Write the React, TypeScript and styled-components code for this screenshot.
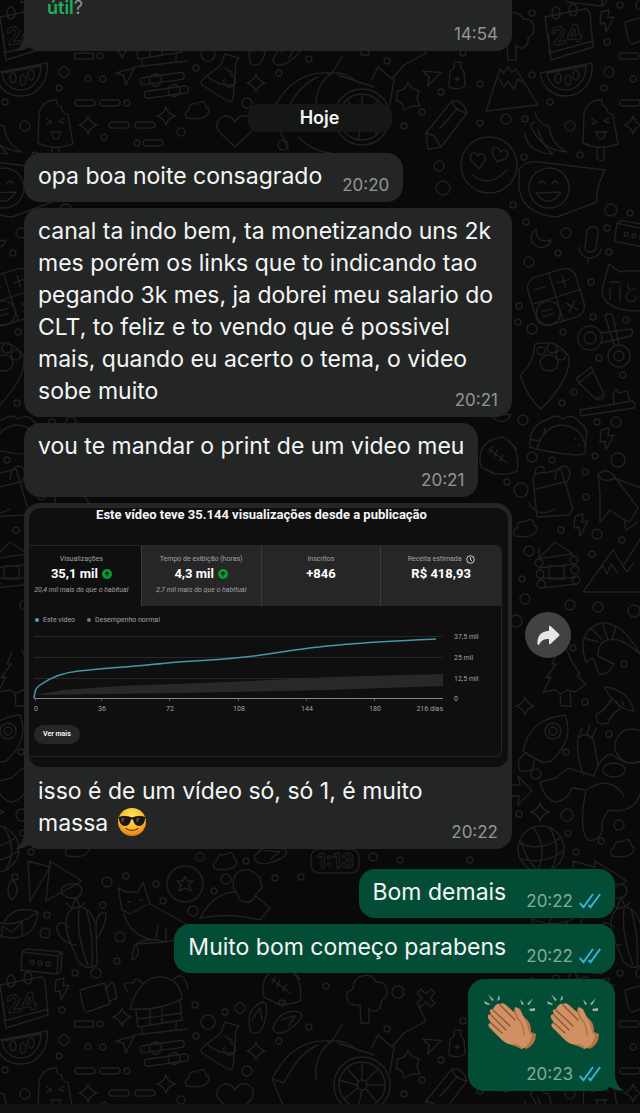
import React from "react";
import styled, { createGlobalStyle, css } from "styled-components";

const GlobalStyle = createGlobalStyle`
  *, *::before, *::after { box-sizing: border-box; }
  body { margin: 0; background: #090909; }
`;

const ui = `Inter, "Liberation Sans", sans-serif`;
const studio = `Roboto, "Liberation Sans", sans-serif`;

const Page = styled.div`
  position: relative;
  display: flex;
  flex-direction: column;
  min-height: 100vh;
  overflow: hidden;
  background: #090909;
  color: #f4f5f5;
  font-family: ${ui};
`;

const WallpaperSvg = styled.svg`
  position: absolute;
  inset: 0;
  width: 100%;
  height: 100%;
  fill: none;
  stroke: #212121;
  stroke-width: 1.4;
  stroke-linecap: round;
  stroke-linejoin: round;

  text { stroke-width: 1; }
`;

const Thread = styled.main`
  position: relative;
  flex: 1;
  display: flex;
  flex-direction: column;
  gap: 6px;
  padding: 0 25px 13px 24px;
`;

const InputEdge = styled.footer`
  position: relative;
  height: 9px;
  background: #111212;
`;

const Row = styled.div<{ $out?: boolean; $gapTop?: number }>`
  display: flex;
  align-items: flex-start;
  justify-content: ${(p) => (p.$out ? "flex-end" : "flex-start")};
  gap: 13px;
  margin-top: ${(p) => p.$gapTop ?? 0}px;
`;

const Bubble = styled.article<{ $out?: boolean; $media?: boolean; $continued?: boolean }>`
  position: relative;
  isolation: isolate;
  display: flow-root;
  max-width: 488px;
  padding: 7px 14px;
  border-radius: 16px;
  background: ${(p) => (p.$out ? "#034d37" : "#242626")};
  font-size: 23px;
  line-height: 32px;
  ${(p) => p.$media && css`padding: 5px 4px 7px 5px; flex: 0 1 488px;`}
  ${(p) =>
    p.$continued &&
    css`
      flex: 0 1 488px;
      padding: 0 14px 7px 23px;
      border-radius: 0 0 16px 16px;
    `}
`;

const Caption = styled.div`
  display: flow-root;
  padding: 8px 10px 0 9px;
`;

const Stamp = styled.span<{ $out?: boolean; $stacked?: boolean }>`
  display: flex;
  align-items: center;
  justify-content: flex-end;
  gap: 6px;
  height: 20px;
  color: ${(p) => (p.$out ? "#83ab9d" : "#939595")};
  font-size: 17px;
  line-height: 20px;
  ${(p) =>
    p.$stacked
      ? css`margin-top: 8px;`
      : css`
          float: right;
          margin: 15px 0 0 20px;
        `}
`;

const Suggestion = styled.p`
  margin: 0 0 6px;
  color: #939595;
  font-size: 18px;
  line-height: 16px;

  a {
    color: #1fae5b;
    font-weight: 600;
    text-decoration: none;
  }
`;

const DayLabel = styled.h2`
  align-self: center;
  width: 144px;
  margin: 47px 0 15px;
  border-radius: 10px;
  background: #151616;
  font-size: 18px;
  font-weight: 600;
  line-height: 28px;
  text-align: center;
`;

const TailSvg = styled.svg<{ $out?: boolean }>`
  position: absolute;
  z-index: -1;
  bottom: 0;
  ${(p) => (p.$out ? "right: -9px;" : "left: -9px; transform: scaleX(-1);")}
  width: 26px;
  height: 20px;
  fill: ${(p) => (p.$out ? "#034d37" : "#242626")};
`;

const ForwardButton = styled.button`
  display: grid;
  place-items: center;
  flex: none;
  width: 46px;
  height: 46px;
  margin-top: 109px;
  padding: 0;
  border: 0;
  border-radius: 50%;
  background: #414244;
`;

const EmojiRow = styled.div`
  display: flex;
  gap: 7px;
  padding: 5px 0;
`;

const SmallEmoji = styled.svg`
  width: 30px;
  height: 30px;
  margin-left: 2px;
  vertical-align: -6px;
`;

/* Video statistics snapshot */

const Snapshot = styled.section`
  height: 259px;
  overflow: hidden;
  border-radius: 12px;
  background: #0f0f0f;
  color: #a2a2a2;
  font-family: ${studio};
  font-size: 7px;
  line-height: 10px;
`;

const SnapshotTitle = styled.h3`
  margin: 0 14px 0 0;
  color: #f5f5f5;
  font-size: 13px;
  font-weight: 700;
  line-height: 14px;
  text-align: center;
`;

const Panel = styled.div`
  height: 212px;
  margin: 23px 6px 0 -8px;
  border: 1px solid #262626;
  border-radius: 6px;
  overflow: hidden;
`;

const Metrics = styled.div`
  display: grid;
  grid-template-columns: repeat(4, 1fr);
  height: 60px;
`;

const Metric = styled.div<{ $active?: boolean }>`
  padding-top: 8px;
  border-right: 1px solid #3a3a3a;
  background: ${(p) => (p.$active ? "transparent" : "#262626")};
  text-align: center;
  white-space: nowrap;

  &:last-child { border-right: 0; }
`;

const MetricLine = styled.div<{ $value?: boolean }>`
  display: flex;
  align-items: center;
  justify-content: center;
  gap: 4px;
  ${(p) =>
    p.$value &&
    css`
      color: #ffffff;
      font-size: 13px;
      font-weight: 700;
      line-height: 20px;
    `}
`;

const MetricNote = styled.div`
  margin-top: 1px;
  font-style: italic;
`;

const Legend = styled.div`
  display: flex;
  gap: 12px;
  padding: 9px 0 0 13px;
`;

const LegendItem = styled.span<{ $color: string }>`
  display: flex;
  align-items: center;
  gap: 4px;

  &::before {
    content: "";
    width: 4px;
    height: 4px;
    border-radius: 50%;
    background: ${(p) => p.$color};
  }
`;

const ChartSvg = styled.svg`
  display: block;
  width: 465px;
  height: 88px;
  margin: 0 0 0 7px;
  fill: #a2a2a2;
  font-size: 7px;
`;

const MoreButton = styled.button`
  display: block;
  height: 19px;
  margin: 12px 0 0 12px;
  padding: 0 9px;
  border: 0;
  border-radius: 10px;
  background: #262626;
  color: #f1f1f1;
  font: 700 7px/19px ${studio};
`;

/* Doodles are drawn round their own origin and placed by x, y, turn */

const shapes: Record<string, React.ReactNode> = {
  sparkle: <path d="M0-9Q2-2 9 0Q2 2 0 9Q-2 2-9 0Q-2-2 0-9Z" />,
  bolt: <path d="M-6-9L2-11L1-3L7-4L-1 11L-2 2L-7 3Z" />,
  pill: <rect x="-10" y="-3" width="20" height="6" rx="3" />,
  heart: <path d="M0 17L-16 2C-24-10-8-22 0-8C8-22 24-10 16 2Z" />,
  plane: <path d="M-9-3L9-8L1 9L-1 0Z" />,
  calendar: (
    <>
      <path d="M-23-16L17-24Q21-24 22-19L25 14L-17 27Z M-19 20L25 8 M-20 1L-17 27" />
      <ellipse cx="-12" cy="-20" rx="4" ry="6" />
      <ellipse cx="5" cy="-23" rx="4" ry="6" />
      <text x="-17" y="10" fontSize="24" fontFamily="Inter, sans-serif" fontWeight="700" transform="rotate(-9)">24</text>
    </>
  ),
  melon: (
    <>
      <path d="M-27-6L25-16C27 4 14 17-1 17C-16 17-25 7-27-6Z M-20-6L19-13C19 2 9 11-1 11C-11 11-19 4-20-6" />
      <ellipse cx="-9" cy="-1" rx="3" ry="5" /><ellipse cx="1" cy="1" rx="3" ry="5" /><ellipse cx="9" cy="-4" rx="3" ry="5" />
    </>
  ),
  popsicle: (
    <>
      <path d="M-17 18L-16-12Q-12-26 2-25Q1-18 6-18Q7-12 13-10L18 19Q0 26-17 18Z M-3 23V34Q1 37 4 34V22" />
      <path d="M-8-6L-3-3L-8-1 M9-7L4-4L9-2 M-5 7H7 M-3 7Q-3 14 1 14Q5 14 5 7" />
    </>
  ),
  sliders: (
    <g transform="rotate(-8)">
      <rect x="-22" y="-9" width="44" height="7" rx="3" /><circle cx="-7" cy="-5" r="6" />
      <rect x="-20" y="5" width="44" height="7" rx="3" /><circle cx="10" cy="8" r="6" />
    </g>
  ),
  flask: <path d="M3-23L17-19L14-15L11 22Q9 26 4 23L-20 8Q-22 4-18 1L-2-11Z M3-9L10-4 M-14 0Q-4 9 11 8 M2 2A6 6 0 1 0 8-2" />,
  volcano: <path d="M-26 24L-12-18L-8-14L-4-20L0-15L4-18L26 18Z M-13-8L-8 0L-4-6L2 2L6-8L10-5" />,
  tree: <path d="M-8 0C-22 3-26-13-15-16C-16-31 4-34 8-23C20-25 23-8 13-4C14 6 4 9 1 3V18H-7Z" />,
  pencil: <path d="M-17 26L-19 10L7-22Q18-24 22-10L-4 24Z M-19 10L-11 13L-4 24 M-5 5L13-15 M7-22Q8-13 22-10" />,
  lover: (
    <>
      <circle r="28" />
      <path d="M-10 4L-18-5C-21-12-13-15-11-9C-8-15-1-9-5-3Z M8-3L3-12C3-20 10-19 11-13C16-18 22-12 17-7Z M-16 10Q0 24 18 5" />
    </>
  ),
  chili: <path d="M-10-20Q-8-8 4-6Q6 12 22 20Q-3 18-12-2Q-17-8-10-10 M-20 2Q-18 20 8 22Q-4 12-7-3" />,
  speech: (
    <>
      <path d="M-28-20Q-22-30-8-28L58-20Q48 0 50 12L10 27Q-26 24-28-4Z" />
      <circle cx="2" cy="-2" r="20" />
      <path d="M-8-6Q-5-12-2-6 M5-6Q8-12 11-6 M-11 3Q2 20 14 2Z" />
    </>
  ),
  rider: <path d="M-66-4Q-46-44-10-42Q6-44 18-34 M-66-4L-54 0Q-40-30-20-38 M-22-4Q-24-30-6-42L4-58 M0-40L36-28 M34-36L40-48L54-36L66-50L88-62L80-78 M56-36L52-10 M-66-4L-50 34 M-40 22Q-26 36-8 38" />,
  wheel: <g><circle r="28" /><circle r="23" /><circle r="5" /><path d="M0-5V-23M5 0H23M0 5L-4 23M-5 0L-23-5M4-4L16-16M-4-4L-15-17M4 4L15 17M-4 3L-18 14" /></g>,
  bottle: <path d="M-8 10L-7-6L-3-9V-15H4V-9L7-5L8 9Q0 14-8 10Z M-2 2L2 2M0 0V4" />,
  leaf: <path d="M-10-6L-4-8L0-14L5-8L11-6L9 2L12 9L3 9L-4 13L-6 6L-12 3Z" />,
  moon: <path d="M-4-10A10 10 0 1 0 11 1Q-4 5-4-10Z" />,
  mic: <path d="M-5-12Q-4-16 1-16Q6-16 6-11L4 5Q3 9-2 9Q-7 9-7 4Z M-13 4Q-12 14-3 15Q7 15 9 6 M-3 15L-4 20" />,
  calc: (
    <g transform="rotate(-17)">
      <rect x="-25" y="-25" width="50" height="50" rx="11" />
      <path d="M0-25V25M-25 0H25M-18-13H-7M12-19V-7M6-13H18M8 9L17 18M17 9L8 18M-18 10H-7M-18 15H-7" />
      <circle cx="-12" cy="13" r="12" />
    </g>
  ),
  cat: <path d="M-28 0L-21-26L-10-18Q10-22 22-14L30-22V8Q18 26-10 19Q-28 14-28 0Z M-20-8H-10M-20-2V10M-10-4V12M-2-6A4 4 0 1 0 5-2M-1 2A5 5 0 1 0 6 6M14-6V10" />,
  scissors: <g><circle cx="-15" cy="0" r="12" /><circle cx="-15" cy="0" r="6" /><circle cx="14" cy="18" r="11" /><circle cx="14" cy="18" r="5" /><path d="M-4-5L26-9Q29-5 26-2L-4 5 M9 7L0-22Q4-27 8-22L14 6" /></g>,
  paw: <g><path d="M-25 0Q-12-10-10-31Q14-36 24-18Q26 4-4 34Q-18 22-25 0Z" /><ellipse cx="4" cy="-12" rx="9" ry="8" /><circle cx="-4" cy="-24" r="4" /><circle cx="7" cy="-27" r="5" /><circle cx="16" cy="-20" r="5" /></g>,
  tube: <path d="M-16-3L-1-15L12 12L4 17L-11 3Z M-13 1L0-10 M4 17L8 18L13 14" />,
  brush: <path d="M-28 4L24-5Q29-3 26 2L-27 10Z M6-2L5-12L8-17L11-13L19-15L22-5" />,
  taco: <path d="M-29 12Q-31-10-10-16Q-4-22 4-16Q14-22 20-13Q30-8 27 4L26 18Q22 23-24 14Z M-22 14Q-16-8 2-10Q22-9 26 10 M-28 4Q-16 10-14-7 M16 4H17M20 10H21M14 11H15" />,
  bag: <path d="M-20-12Q-18-20-8-18L8-22L20 18L16 24L-16 26Z M-17-2L12-9 M2-12Q4-28 14-24Q20-18 14-9 M-24 12Q-16 28 2 18 M-18-18Q-18-26-9-24V-18" />,
  shuttle: <path d="M-18-21Q-10-30-2-20L22 12L14 26L8 24L-6 14L-16 26L-16-2Z M-18-21Q-14-12 0-18 M8 24L10 34L22 26 M-2-18L30-6" />,
  cabin: <path d="M-18-8L-2-24L16-12M-20-7L15-12M-18 2L18-2M-16 12H18M-16 22L20 18M-8 0H7V13H-8Z M-18-18V-8M-18-7a4 4 0 1 0 .1 0M-17 4a4 4 0 1 0 .1 0M-16 14a4 4 0 1 0 .1 0M17-10a4 4 0 1 0 .1 0M18 0a4 4 0 1 0 .1 0M19 10a4 4 0 1 0 .1 0" />,
  peaks: <path d="M-28 22L2-20L12-4L30-32M-28 22H32M-12 0L-8-4L-4 4L0-6L6 2M12-4L16 2L22-6" />,
  shrimp: <path d="M-16 22Q-26-6-4-16Q18-22 38 14Q18-4 6 0Q-4 2-4 16L12 24Q6 36-3 34L-9 18Z M-18-2L-4 2M-12-12L0-1M0-18L6 0M14-14L10 0" />,
  pine: <path d="M-6-20L-11-8L-7-8L-17 6L-12 5L-20 20L-8 18L-2 22L4 18L12 20L23 12L14 4L17 2L8-12L4-22 M-3 22L-2 34H8L7 20" />,
  mushroom: <path d="M-12-14Q12-12 18 10Q2 10-12-14Z M-4-2Q-12 10-20 14Q-20 26-8 22Q-4 12 4 8 M0 0L4 6M6 0L8 5" />,
  rocket: <g><path d="M-22 12Q-16-20 20-24Q30 0 6 22Q-4 26-22 12Z M-22 12L-2 24" /><circle cx="8" cy="-8" r="8" /><circle cx="8" cy="-8" r="4" /><path d="M-18 14Q-30 18-25 32Q-10 34-11 22" /></g>,
  astronaut: (
    <>
      <path d="M-50 12Q-45 30-34 32Q-22 30-18 18L-4 20Q-12 60-2 70Q14 72 12 52L18 40Q44 44 50 24M-50 12L-34 8L-22-2L4 6Q10-14 22-16Q34-4 50-8M-6 6Q-14-12-12-32Q-2-40 4-28L8-4M-12-32L-8-42M-3-36L0-46M2-32L6-42M-4 20Q20 4 34 26" />
      <circle cx="42" cy="-24" r="17" />
      <ellipse cx="24" cy="0" rx="11" ry="7" />
    </>
  ),
  arrow: <path d="M-12-6H0L-2-15L12 0L-2 14L-1 5H-12Z" />,
  globe: <g><circle r="23" /><path d="M-22-6Q0 4 20-12M-20 10Q4 16 22 2M-8-22Q8 0-4 23M8-22Q22 0 10 21M-20-8Q-14 14-2 22" /></g>,
  box: <g><path d="M-20-10L16-6L20-10L19 9L15 12L-21 8Z M16-6L15 12 M-20-10L-16-13L20-10" /><circle cx="-10" cy="0" r="2" /><circle cx="-2" cy="1" r="2" /><circle cx="6" cy="2" r="2" /></g>,
  cactus: <path d="M-6 20Q-24-14-10-26Q6-34 14-10L15 30Q4 36-4 26Z M-13-8Q-26-18-25-4Q-20 8-6 10 M14-10Q16-24 24-22Q24-8 14 4 M-3-26Q-6 0 6 30 M4-26Q12 0 10 32 M-16-32L-10-27L-6-38L-2-28L3-32" />,
  fox: <path d="M-34-28L-26-24L-14-24L-9-34L-2-12L34 8Q36 22 14 26L-16 28Q-10 40-20 44L-18 30Q-8 20 14 26 M-34-28L-30-6L-22-2L-4-12 M-28-2Q-22 20 2 24 M-24-14H-22M-12-16H-10M6 10L4 22M14 12L14 24" />,
  medal: <g><circle r="18" /><path d="M0-8L2-3L8-3L4 1L6 7L0 4L-6 7L-4 1L-8-3L-2-3Z" /></g>,
  statue: <path d="M-48 26Q-34 0-12 0L-8 8Q4 14 8 2L14-4L12-14Q0-28-12-18Q-18-6-12 0 M-48 26Q-20 20 12 28L22 16L8 4" />,
  camera: <path d="M-17-8L8-15L13 6L-10 14Q-14 14-17-8Z M8-8L14-16L17-14L20 0L13 3" />,
  hut: <path d="M-28 4Q-18-30 4-28Q22-26 24-6Q0 6-28 4Z M-22 6L-20 22L24 15L22-4M-20 14L24 8M-8 4V20M4 3V17M-16 22V30M18 16V24M-24 30L30 24M-30-14Q-40-24-24-22Q-24-30-16-22M16-26Q26-36 30-16" />,
  sandal: <path d="M-7 14Q-14-8 4-16Q12-16 6 6Q2 18-7 14Z M-6 2L2-10L4 2" />,
  kite: <path d="M-24-22L-2-16L-22 18Z M-2-22L30-2L-6 18Z M-24-22L-22 18 M10 4Q28-4 30 8Q28 18 14 14Q8 10 10 4" />,
  lamp: <path d="M-26 0Q0 14 26-6Q24 18 2 20Q-20 20-26 0Z M-8 4Q2-14 26-6 M0-18Q-8-28 0-38Q10-28 0-18Z M-10 20V8L0 14L10 4V18" />,
  clock: <g><rect x="-24" y="-12" width="48" height="24" rx="8" /><text x="-18" y="7" fontSize="20" fontFamily="Inter, sans-serif" fontWeight="700">1:13</text></g>,
  cross: <path d="M-9-5L-5-9L0-4L5-9L9-5L4 0L9 5L5 9L0 4L-5 9L-9 5L-4 0Z" />,
  cloud: <path d="M-10 8Q-14 2-8 0Q-8-8-1-6Q8-12 9-3Q15 0 9 6Q4 10-10 8Z" />,
  ball: <path d="M-18 12Q-24-14 4-18Q22-8 18 16Q0 24-18 12Z M-10-6L8 8M-7-8L-9-2M-2-5L-5 2M4 0L1 6 M10-14L18-6 M-14 14L-4 19" />,
};

const doodles: [string, number, number, number?][] = [
  ["calendar", 568, 33], ["bolt", 607, 21], ["melon", 567, 79], ["popsicle", 600, 125], ["tree", 515, 42],
  ["volcano", 512, 87], ["pencil", 445, 123], ["lover", 489, 165], ["chili", 545, 132], ["speech", 547, 190],
  ["rider", 338, 115], ["wheel", 362, 117], ["bottle", 457, 77], ["leaf", 408, 97], ["heart", 235, 130],
  ["sliders", 163, 84], ["flask", 222, 77], ["sparkle", 256, 83], ["sparkle", 88, 125], ["sparkle", 166, 116],
  ["pill", 84, 56], ["pill", 85, 103], ["pill", 110, 103], ["pill", 119, 125], ["pill", 145, 125], ["pill", 153, 143],
  ["plane", 125, 76], ["cloud", 197, 110], ["plane", 430, 77, 20], ["sandal", 258, 50], ["sandal", 287, 54, 40],
  ["cross", 426, 30], ["moon", 540, 239], ["mic", 592, 243], ["box", 636, 235, 5], ["calc", 556, 297],
  ["cat", 630, 290], ["scissors", 605, 338], ["paw", 545, 375], ["tube", 592, 382], ["brush", 608, 406],
  ["taco", 559, 435], ["bolt", 607, 439], ["bag", 553, 491], ["shuttle", 616, 496], ["bolt", 581, 525],
  ["cabin", 557, 566], ["peaks", 611, 570], ["shrimp", 602, 640], ["pine", 563, 672], ["mushroom", 616, 701],
  ["rocket", 545, 739], ["astronaut", 590, 770], ["arrow", 520, 791], ["globe", 541, 849], ["sparkle", 525, 706],
  ["sparkle", 540, 812], ["cloud", 622, 848], ["cloud", 525, 528], ["ball", 499, 455], ["kite", 52, 883], ["lamp", 12, 918],
  ["cactus", 82, 935], ["box", 42, 962], ["fox", 152, 916], ["medal", 185, 884], ["statue", 248, 892],
  ["clock", 335, 861], ["camera", 97, 998], ["hut", 158, 1005], ["sparkle", 122, 1017],
  ["cloud", 225, 861], ["ball", 282, 985], ["tree", 368, 1005], ["moon", 500, 413],
  ["sandal", 270, 855, 60],
];

const dots: [number, number, number][] = [
  [64, 72, 5], [100, 56, 3], [88, 79, 3], [103, 79, 3], [59, 88, 3], [127, 103, 3], [25, 126, 5], [104, 137, 3],
  [137, 143, 3], [181, 132, 4], [196, 68, 3], [208, 54, 7], [309, 59, 3], [279, 73, 3], [247, 103, 5], [283, 145, 5],
  [387, 61, 3], [404, 126, 3], [422, 112, 3], [441, 92, 3], [439, 166, 5], [443, 188, 7], [480, 123, 3], [480, 84, 3],
  [506, 119, 5], [525, 119, 3], [524, 157, 3], [532, 13, 3], [550, 102, 3], [532, 75, 3],
  [607, 42, 3], [580, 155, 3], [513, 205, 3], [526, 222, 3], [611, 210, 6], [630, 213, 3],
  [566, 233, 5], [607, 228, 3], [558, 253, 3], [529, 262, 5], [609, 252, 3], [591, 282, 3], [519, 306, 3],
  [518, 322, 3], [532, 329, 5], [563, 332, 3], [593, 317, 3], [626, 320, 3], [599, 358, 3], [623, 375, 3], [574, 392, 3],
  [562, 403, 3], [523, 420, 5], [597, 422, 3], [616, 422, 5], [532, 457, 5], [552, 460, 3], [595, 456, 3], [618, 460, 7],
  [585, 472, 3], [521, 490, 7], [586, 497, 3], [507, 482, 3], [561, 530, 3], [597, 534, 5], [622, 540, 3], [529, 551, 5],
  [592, 554, 3], [522, 579, 3], [525, 599, 5], [570, 605, 5], [598, 607, 5], [516, 621, 6], [634, 611, 6], [573, 648, 3],
  [624, 664, 3], [585, 702, 3], [609, 734, 3], [566, 752, 3], [536, 774, 5], [519, 814, 3], [567, 815, 6], [619, 825, 5],
  [568, 833, 3], [601, 841, 3], [576, 852, 3], [15, 877, 3], [107, 882, 5], [126, 876, 3], [156, 884, 3],
  [103, 905, 3], [47, 915, 3], [45, 933, 5], [120, 937, 5], [163, 901, 3], [193, 911, 5], [117, 961, 3], [75, 973, 3],
  [96, 973, 5], [226, 879, 5], [214, 891, 3], [275, 878, 3], [301, 877, 3], [200, 857, 4], [246, 861, 3],
  [195, 1005, 3], [240, 1008, 5], [225, 1012, 3], [282, 1003, 3], [326, 986, 3], [398, 992, 6],
  [463, 1021, 3], [373, 857, 4], [400, 860, 3], [470, 860, 3],
];

const Wallpaper = () => (
  <WallpaperSvg aria-hidden="true">
    <defs>
      <g id="doodles">
        {doodles.map(([name, x, y, turn = 0], i) => (
          <g key={i} transform={`translate(${x} ${y}) rotate(${turn})`}>{shapes[name]}</g>
        ))}
        {dots.map(([x, y, r], i) => <circle key={i} cx={x} cy={y} r={r} />)}
      </g>
    </defs>
    {[-968, 0, 968].map((y) =>
      [-545, 0, 545, 1090].map((x) => <use key={`${x} ${y}`} href="#doodles" x={x} y={y} />)
    )}
  </WallpaperSvg>
);

const Tail = ({ out }: { out?: boolean }) => (
  <TailSvg $out={out} viewBox="0 0 26 20" aria-hidden="true">
    <path d="M0 20V0H17Q16 14 26 20Q18 20 12 16Q8 20 0 20Z" />
  </TailSvg>
);

const Ticks = () => (
  <svg width="22" height="16" viewBox="0 0 22 16" fill="none" stroke="#35b0d8" strokeWidth="2" role="img" aria-label="Lida">
    <path d="M.8 10L4.500 14.200L14 1M9.500 12L11.500 14.200L21.200 1" />
  </svg>
);

const CoolFace = () => (
  <SmallEmoji viewBox="0 0 30 30" role="img" aria-label="😎">
    <defs>
      <radialGradient id="face" cx=".5" cy=".3" r=".75">
        <stop offset="0" stopColor="#ffe95c" />
        <stop offset=".6" stopColor="#f8b52b" />
        <stop offset="1" stopColor="#dc7412" />
      </radialGradient>
    </defs>
    <circle cx="15" cy="15" r="14" fill="url(#face)" />
    <path d="M1.500 10Q8 8 15 10.500Q22 8 28.500 10L28 12Q27 19 22 19Q17 18.500 16 12.500H14Q13 18.500 8 19Q3 19 2 12Z" fill="#191512" />
    <path d="M4 11.500L8 11L5 16ZM19 11.500L23 11L20 16Z" fill="#55504b" />
    <path d="M9 21.500Q15 25.500 21 21.500" fill="none" stroke="#7b3d08" strokeWidth="1.500" strokeLinecap="round" />
  </SmallEmoji>
);

const Clap = () => (
  <svg width="56" height="60" viewBox="0 0 56 60" role="img" aria-label="👏🏽">
    <g fill="#9fb3ab">
      <path d="M2 10L8 13L7 14L3 13ZM6 3L12 9L10 10ZM17 4L15 10L18 8ZM38 8L40 14L42 13ZM51 7L45 13L47 14ZM53 17L47 18L48 20H53Z" />
    </g>
    <path d="M32 20Q34 16 38 18L42 26Q50 32 49 41L54 43Q54 54 44 58L35 50Z" fill="#b57448" />
    <path d="M18 13Q21 11 24 14L34 23Q31 17 34 16Q38 17 40 24Q45 30 47 41L50 45Q48 54 40 58L31 54Q23 53 18 47L7 36Q5 32 9 32L6 27Q5 23 9 23Q6 18 11 18Q14 12 18 13Z" fill="#cf9163" />
    <path d="M18 14L33 29M11 19L28 35M9 24L24 39M9 32L20 42" fill="none" stroke="#8d5534" strokeWidth="1.300" strokeLinecap="round" />
    <path d="M33 19Q33 25 38 30Q42 36 42 44M31 54Q36 53 39 57" fill="none" stroke="#ad6d43" strokeWidth="1.300" strokeLinecap="round" />
  </svg>
);

const UpBadge = () => (
  <svg width="10" height="10" viewBox="0 0 10 10" role="img" aria-label="acima">
    <circle cx="5" cy="5" r="5" fill="#0a9b34" />
    <path d="M5 7.500V3M3 5L5 3L7 5" fill="none" stroke="#07230f" strokeWidth="1.200" />
  </svg>
);

const ClockIcon = () => (
  <svg width="9" height="9" viewBox="0 0 9 9" fill="none" stroke="#d0d0d0" aria-hidden="true">
    <circle cx="4.500" cy="4.500" r="3.800" />
    <path d="M4.500 2.200V4.800L6 5.600" />
  </svg>
);

const xLabels: [string, number][] = [["0", 7], ["36", 73], ["72", 141], ["108", 210], ["144", 278], ["180", 346]];
const yLabels: [string, number][] = [["37,5 mil", 12], ["25 mil", 33], ["12,5 mil", 54], ["0", 74]];

const Chart = () => (
  <ChartSvg viewBox="0 0 465 88" role="img" aria-label="Visualizações ao longo de 216 dias">
    {yLabels.map(([label, y]) => (
      <g key={label}>
        <path d={`M5 ${y - 0.5}H414`} stroke={label === "0" ? "#8a8a8a" : "#272727"} />
        <text x="425" y={y + 2}>{label}</text>
      </g>
    ))}
    <path d="M6 70L35 65L90 61L200 57L300 52L414 49V61L300 65L150 68Z" fill="#282828" />
    <path d="M5 73C6 64 8 62 11 60Q28 48 50 46C80 43 110 41 138 38C165 36 185 35 206 33C240 30 260 25 290 22C330 17 370 16 407 14" fill="none" stroke="#4498a8" strokeWidth="1.500" />
    {xLabels.map(([label, x]) => (
      <g key={label}>
        <path d={`M${x - 0.5} 74V76`} stroke="#555" />
        <text x={x} y="86" textAnchor="middle">{label}</text>
      </g>
    ))}
    <text x="414" y="86" textAnchor="end">216 dias</text>
  </ChartSvg>
);

const VideoStats = () => (
  <Snapshot>
    <SnapshotTitle>Este vídeo teve 35.144 visualizações desde a publicação</SnapshotTitle>
    <Panel>
      <Metrics>
        <Metric $active>
          <MetricLine>Visualizações</MetricLine>
          <MetricLine $value>35,1 mil <UpBadge /></MetricLine>
          <MetricNote>20,4 mil mais do que o habitual</MetricNote>
        </Metric>
        <Metric>
          <MetricLine>Tempo de exibição (horas)</MetricLine>
          <MetricLine $value>4,3 mil <UpBadge /></MetricLine>
          <MetricNote>2,7 mil mais do que o habitual</MetricNote>
        </Metric>
        <Metric>
          <MetricLine>Inscritos</MetricLine>
          <MetricLine $value>+846</MetricLine>
        </Metric>
        <Metric>
          <MetricLine>Receita estimada <ClockIcon /></MetricLine>
          <MetricLine $value>R$ 418,93</MetricLine>
        </Metric>
      </Metrics>
      <Legend>
        <LegendItem $color="#45a9b8">Este vídeo</LegendItem>
        <LegendItem $color="#777777">Desempenho normal</LegendItem>
      </Legend>
      <Chart />
      <MoreButton type="button">Ver mais</MoreButton>
    </Panel>
  </Snapshot>
);

const ReadStamp = ({ time, stacked }: { time: string; stacked?: boolean }) => (
  <Stamp $out $stacked={stacked}>{time}<Ticks /></Stamp>
);

export default function App() {
  return (
    <>
      <GlobalStyle />
      <Page>
        <Wallpaper />
        <Thread>
          <Row>
            <Bubble $continued>
              <Suggestion><a href="#util">útil</a>?</Suggestion>
              <Stamp $stacked>14:54</Stamp>
              <Tail />
            </Bubble>
          </Row>
          <DayLabel>Hoje</DayLabel>
          <Row>
            <Bubble>opa boa noite consagrado<Stamp>20:20</Stamp></Bubble>
          </Row>
          <Row>
            <Bubble>
              canal ta indo bem, ta monetizando uns 2k mes porém os links que to indicando tao pegando 3k mes, ja
              dobrei meu salario do CLT, to feliz e to vendo que é possivel mais, quando eu acerto o tema, o video
              sobe muito
              <Stamp>20:21</Stamp>
            </Bubble>
          </Row>
          <Row>
            <Bubble>vou te mandar o print de um video meu<Stamp $stacked>20:21</Stamp></Bubble>
          </Row>
          <Row>
            <Bubble $media>
              <VideoStats />
              <Caption>
                isso é de um vídeo só, só 1, é muito<br />massa <CoolFace />
                <Stamp>20:22</Stamp>
              </Caption>
              <Tail />
            </Bubble>
            <ForwardButton type="button" aria-label="Encaminhar">
              <svg width="23" height="21" viewBox="0 0 23 21" fill="#e6e6e6">
                <path d="M12 1.800Q12 0 13.500 1L22 9Q23 10 22 11L13.500 19Q12 20 12 18.200V14Q5 13.500 2.500 19Q1 21 .5 18.500Q0 7 12 5.800Z" />
              </svg>
            </ForwardButton>
          </Row>
          <Row $out $gapTop={14}>
            <Bubble $out>Bom demais<ReadStamp time="20:22" /></Bubble>
          </Row>
          <Row $out>
            <Bubble $out>Muito bom começo parabens<ReadStamp time="20:22" /></Bubble>
          </Row>
          <Row $out>
            <Bubble $out>
              <EmojiRow><Clap /><Clap /></EmojiRow>
              <ReadStamp time="20:23" stacked />
              <Tail out />
            </Bubble>
          </Row>
        </Thread>
        <InputEdge />
      </Page>
    </>
  );
}
